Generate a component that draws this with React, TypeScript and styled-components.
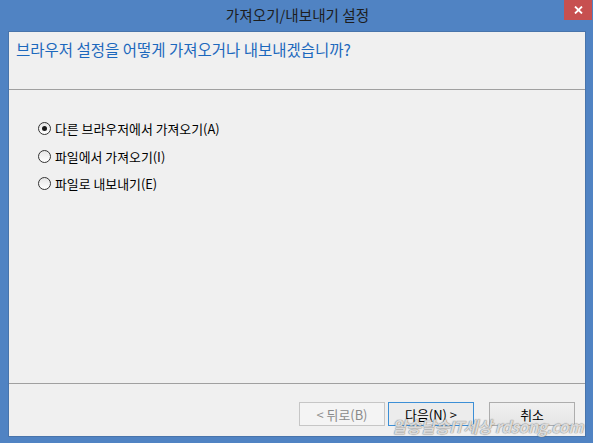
import React from "react";
import styled, { createGlobalStyle } from "styled-components";

const Global = createGlobalStyle`
  html, body { margin: 0; padding: 0; }
  body {
    width: 593px; height: 443px; overflow: hidden;
    background: #4f82c3;
    font-family: "Noto Sans CJK KR", "Noto Sans", sans-serif;
  }
`;

const Win = styled.div`
  position: relative;
  width: 593px;
  height: 443px;
  background: #5083c3;
  display: flex;
  flex-direction: column;
  box-sizing: border-box;
  padding: 0 7px 6px 8px;
`;

const TitleBar = styled.div`
  height: 30px;
  flex: none;
  display: flex;
  align-items: center;
  justify-content: center;
  position: relative;
  padding-bottom: 1px;
`;

const TitleText = styled.div`
  font-size: 14.6px;
  color: #1d1d1d;
  margin-left: 1px;
  margin-top: -2px;
`;

const CloseBtn = styled.div`
  position: absolute;
  top: 0;
  right: -6px;
  width: 28px;
  height: 20px;
  background: #c75050;
  display: flex;
  align-items: center;
  justify-content: center;
`;

const Client = styled.div`
  flex: 1;
  background: #f0f0f0;
  display: flex;
  flex-direction: column;
  border: 1px solid #4874ab;
`;

const Header = styled.div`
  height: 57px;
  flex: none;
  box-sizing: border-box;
  padding: 6px 0 0 7px;
  font-size: 15.5px;
  color: #1c68bd;
`;

const Rule = styled.div`
  height: 1px;
  background: #a0a0a0;
  flex: none;
`;

const Content = styled.div`
  flex: 1;
  display: flex;
  flex-direction: column;
  padding: 30px 0 0 29px;
  gap: 10px;
`;

const Option = styled.label`
  display: flex;
  align-items: center;
  height: 17.5px;
  font-size: 12.9px;
  color: #000;
  gap: 4px;
`;

const Radio = styled.span<{ $checked?: boolean }>`
  width: 11px;
  height: 11px;
  border-radius: 50%;
  border: 1px solid #333;
  background: linear-gradient(#e6e6e6, #ffffff);
  display: flex;
  align-items: center;
  justify-content: center;
  flex: none;
  &::after {
    content: "";
    display: ${(p) => (p.$checked ? "block" : "none")};
    width: 5px;
    height: 5px;
    border-radius: 50%;
    background: #1a1a1a;
  }
`;

const Footer = styled.div`
  height: 52px;
  flex: none;
  display: flex;
  justify-content: flex-end;
  align-items: flex-start;
  padding: 18px 10px 0 0;
  box-sizing: border-box;
`;

const Button = styled.div<{ $disabled?: boolean; $default?: boolean; $gap?: number }>`
  width: 86px;
  height: 24px;
  box-sizing: border-box;
  display: flex;
  align-items: center;
  justify-content: center;
  font-size: 12.9px;
  margin-left: ${(p) => p.$gap ?? 0}px;
  color: ${(p) => (p.$disabled ? "#8a8a8a" : "#000")};
  border: 1px solid ${(p) => (p.$disabled ? "#c6c6c6" : p.$default ? "#3c8fd6" : "#adadad")};
  background: ${(p) =>
    p.$disabled ? "#f4f4f4" : p.$default ? "#ececec" : "linear-gradient(#f0f0f0, #e5e5e5)"};
`;

const Watermark = styled.div`
  position: absolute;
  right: 10px;
  bottom: 5px;
  font-size: 16px;
  font-weight: 700;
  font-style: italic;
  color: rgba(255, 255, 255, 0.75);
  text-shadow: 0 0 1px rgba(90, 90, 90, 0.7), 0 0 1px rgba(90, 90, 90, 0.7);
  letter-spacing: -0.5px;
  pointer-events: none;
`;

export default function App() {
  return (
    <>
      <Global />
      <Win>
        <TitleBar>
          <TitleText>가져오기/내보내기 설정</TitleText>
          <CloseBtn>
            <svg width="9" height="8" viewBox="0 0 9 8">
              <path d="M1 0.5 L8 7.5 M8 0.5 L1 7.5" stroke="#fff" strokeWidth="1.8" />
            </svg>
          </CloseBtn>
        </TitleBar>
        <Client>
          <Header>브라우저 설정을 어떻게 가져오거나 내보내겠습니까?</Header>
          <Rule />
          <Content>
            <Option>
              <Radio $checked />
              다른 브라우저에서 가져오기(A)
            </Option>
            <Option>
              <Radio />
              파일에서 가져오기(I)
            </Option>
            <Option>
              <Radio />
              파일로 내보내기(E)
            </Option>
          </Content>
          <Rule />
          <Footer>
            <Button $disabled>&lt; 뒤로(B)</Button>
            <Button $default $gap={3}>다음(N) &gt;</Button>
            <Button $gap={15}>취소</Button>
          </Footer>
        </Client>
        <Watermark>알송달송IT세상 rdsong.com</Watermark>
      </Win>
    </>
  );
}
